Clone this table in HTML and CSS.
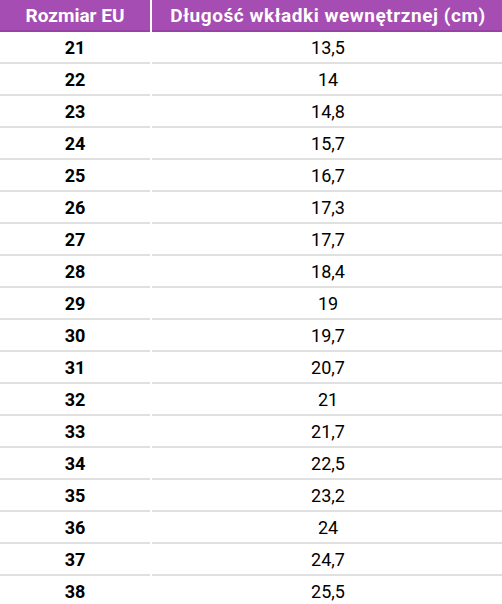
FILE: index.html
```html
<!DOCTYPE html>
<html lang="pl">
<head>
<meta charset="utf-8">
<link rel="stylesheet" href="styles.css">
</head>
<body>
<div class="table">
  <div class="th">Rozmiar EU</div><div class="th">Długość wkładki wewnętrznej (cm)</div>
  <div class="td size">21</div><div class="td">13,5</div>
  <div class="td size">22</div><div class="td">14</div>
  <div class="td size">23</div><div class="td">14,8</div>
  <div class="td size">24</div><div class="td">15,7</div>
  <div class="td size">25</div><div class="td">16,7</div>
  <div class="td size">26</div><div class="td">17,3</div>
  <div class="td size">27</div><div class="td">17,7</div>
  <div class="td size">28</div><div class="td">18,4</div>
  <div class="td size">29</div><div class="td">19</div>
  <div class="td size">30</div><div class="td">19,7</div>
  <div class="td size">31</div><div class="td">20,7</div>
  <div class="td size">32</div><div class="td">21</div>
  <div class="td size">33</div><div class="td">21,7</div>
  <div class="td size">34</div><div class="td">22,5</div>
  <div class="td size">35</div><div class="td">23,2</div>
  <div class="td size">36</div><div class="td">24</div>
  <div class="td size">37</div><div class="td">24,7</div>
  <div class="td size">38</div><div class="td">25,5</div>
</div>
</body>
</html>
```
FILE: styles.css
```css
html, body {
  margin: 0;
  padding: 0;
  background: #fff;
}
body {
  font-family: Roboto, "Liberation Sans", sans-serif;
  color: #000;
}
.table {
  display: grid;
  grid-template-columns: 150px 350px;
  column-gap: 2px;
  width: 502px;
}
.th {
  height: 30px;
  background: #a64db3;
  border-bottom: 2px solid #9742a4;
  color: #fff;
  font-weight: 700;
  font-size: 19px;
  white-space: nowrap;
  display: flex;
  align-items: center;
  justify-content: center;
}
.th:nth-child(2) {
  margin-right: -2px;
  letter-spacing: 0.55px;
}
.td {
  height: 30px;
  border-bottom: 2px solid #e0e0e0;
  display: flex;
  align-items: center;
  justify-content: center;
  font-size: 18px;
}
.td:nth-child(even) {
  margin-right: -2px;
}
.size {
  font-weight: 700;
}
```
